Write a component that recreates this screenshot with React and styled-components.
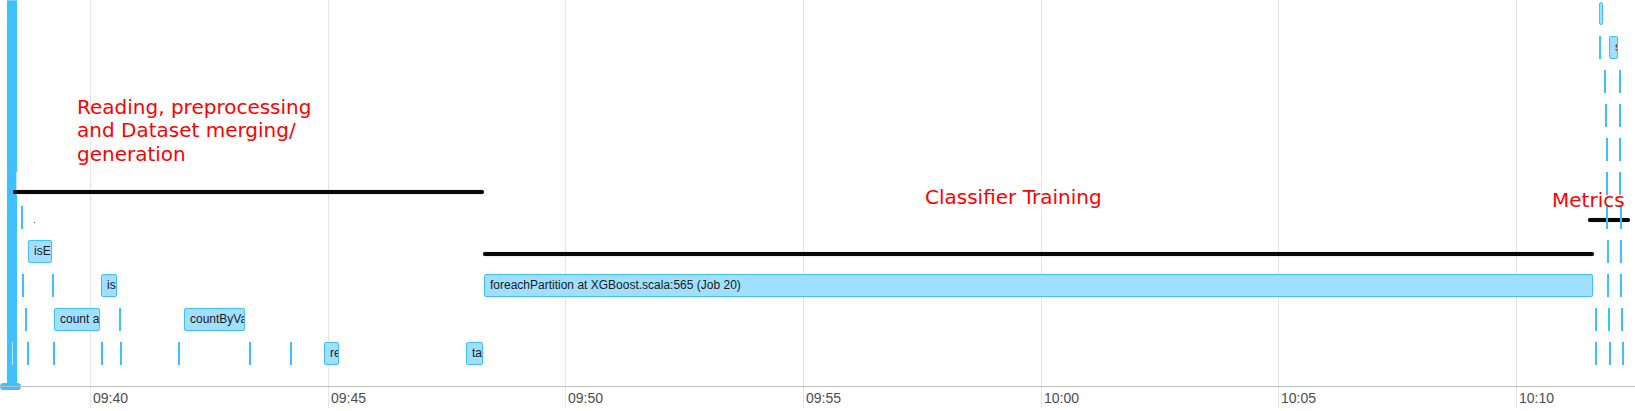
import styled, { createGlobalStyle } from 'styled-components';

const GlobalStyle = createGlobalStyle`
  html, body {
    margin: 0;
    padding: 0;
    background: #ffffff;
  }
  body {
    font-family: "Liberation Sans", Arial, sans-serif;
  }
`;

// 09:40 sits at x=90, five minutes are ~237.7px
const ORIGIN = 90;
const FIVE_MIN = 237.67;
const ticks = ['09:40', '09:45', '09:50', '09:55', '10:00', '10:05', '10:10'].map((label, i) => ({
  label,
  x: Math.round(ORIGIN + i * FIVE_MIN),
}));

const line = (x) => ({ kind: 'line', x });
const box = (x, w, label = '') => ({ kind: 'box', x, w, label });
const ghost = (x) => ({ kind: 'ghost', x });
const dot = (x) => ({ kind: 'dot', x });

const rows = [
  [box(1599, 4)],
  [line(1599), box(1609, 9, 'saveAsTextFile')],
  [line(1604), line(1619)],
  [line(1605), line(1619)],
  [line(1606), line(1619)],
  [ghost(16), line(1606), line(1619)],
  [line(21), dot(34), line(1606), line(1620)],
  [box(28, 24, 'isEmpty at Preprocessing.scala'), line(1607), line(1620)],
  [
    line(22),
    line(52),
    box(101, 16, 'isEmpty at Dataset.scala'),
    box(484, 1109, 'foreachPartition at XGBoost.scala:565 (Job 20)'),
    line(1607),
    line(1620),
  ],
  [
    line(25),
    box(54, 46, 'count at Preprocessing.scala'),
    line(119),
    box(184, 61, 'countByValue at Merge.scala'),
    line(1595),
    line(1608),
    line(1621),
  ],
  [
    ghost(12),
    line(27),
    line(53),
    line(101),
    line(120),
    line(178),
    line(249),
    line(290),
    box(324, 15, 'reduce at Dataset.scala'),
    box(466, 17, 'take at Dataset.scala'),
    line(1595),
    line(1609),
    line(1622),
  ],
];

function Item({ item }) {
  if (item.kind === 'line') return <Tick style={{ left: item.x }} />;
  if (item.kind === 'ghost') return <Ghost style={{ left: item.x }} />;
  if (item.kind === 'dot') return <Dot style={{ left: item.x }} />;
  return (
    <Box style={{ left: item.x, width: item.w }}>
      <BoxText>{item.label}</BoxText>
    </Box>
  );
}

function App() {
  return (
    <>
      <GlobalStyle />
      <Timeline>
        <Grid>
          {ticks.map((t) => (
            <GridLine key={t.label} style={{ left: t.x }} />
          ))}
        </Grid>

        <JobBar />
        <JobFoot />

        <Rows>
          {rows.map((row, i) => (
            <Row key={i}>
              {row.map((item, j) => (
                <Item key={j} item={item} />
              ))}
            </Row>
          ))}
        </Rows>

        <Axis>
          {ticks.map((t) => (
            <TickLabel key={t.label} style={{ left: t.x + 3 }}>
              {t.label}
            </TickLabel>
          ))}
        </Axis>

        <Note $left={77} $top={96}>
          Reading, preprocessing
          <br />
          and Dataset merging/
          <br />
          generation
        </Note>
        <Note $left={925} $top={186}>Classifier Training</Note>
        <Note $left={1552} $top={189}>Metrics</Note>

        <Stroke $left={13} $top={190} $width={471} />
        <Stroke $left={483} $top={252} $width={1111} />
        <Stroke $left={1588} $top={218} $width={42} $under />
      </Timeline>
    </>
  );
}

const Timeline = styled.div`
  position: relative;
  display: flex;
  flex-direction: column;
  width: 1635px;
  height: 411px;
  padding-top: 2px;
  box-sizing: border-box;
  overflow: hidden;
  background: #ffffff;
`;

const Grid = styled.div`
  position: absolute;
  top: 0;
  left: 0;
  right: 0;
  height: 408px;
  z-index: 0;
`;

const GridLine = styled.div`
  position: absolute;
  top: 0;
  bottom: 0;
  width: 1px;
  background: #e5e5e5;
`;

const JobBar = styled.div`
  position: absolute;
  left: 7px;
  top: 0;
  width: 10px;
  height: 386px;
  background: #3ec0ff;
  z-index: 1;
  box-shadow: inset 0 65px 0 -64px rgba(255, 255, 255, 0.35);
`;

const JobFoot = styled.div`
  position: absolute;
  left: 0;
  top: 383px;
  width: 21px;
  height: 7px;
  border-radius: 4px;
  background: #3ec0ff;
  z-index: 1;
`;

const Rows = styled.div`
  position: relative;
  z-index: 2;
  display: flex;
  flex-direction: column;
  gap: 11px;
`;

const Row = styled.div`
  position: relative;
  height: 23px;
`;

const Tick = styled.div`
  position: absolute;
  top: 0;
  width: 2px;
  height: 100%;
  background: #3ec0ff;
`;

const Ghost = styled.div`
  position: absolute;
  top: 0;
  width: 1px;
  height: 100%;
  background: #b9e6ff;
`;

const Dot = styled.div`
  position: absolute;
  top: 16px;
  width: 1px;
  height: 1px;
  background: #444444;
`;

const Box = styled.div`
  position: absolute;
  top: 0;
  box-sizing: border-box;
  height: 100%;
  background: #a0dfff;
  border: 1px solid #3ec0ff;
  border-radius: 2px;
  overflow: hidden;
`;

const BoxText = styled.div`
  padding-left: 5px;
  font-size: 12px;
  line-height: 21px;
  color: #1a1a1a;
  white-space: nowrap;
`;

const Axis = styled.div`
  position: relative;
  z-index: 2;
  margin-top: 21px;
  height: 24px;
  border-top: 1px solid #bfbfbf;
`;

const TickLabel = styled.span`
  position: absolute;
  top: 3px;
  font-size: 14px;
  color: #4d4d4d;
  white-space: nowrap;
`;

const Note = styled.div`
  position: absolute;
  left: ${(p) => p.$left}px;
  top: ${(p) => p.$top}px;
  z-index: 3;
  font-family: "DejaVu Sans", Verdana, sans-serif;
  font-size: 20px;
  line-height: 23.3px;
  color: #ff0000;
  white-space: nowrap;
`;

const Stroke = styled.div`
  position: absolute;
  left: ${(p) => p.$left}px;
  top: ${(p) => p.$top}px;
  width: ${(p) => p.$width}px;
  height: 4px;
  border-radius: 2px;
  background: #080808;
  box-shadow: 0 0 1px rgba(0, 0, 0, 0.6);
  z-index: ${(p) => (p.$under ? 1 : 3)};
`;

export default App;
